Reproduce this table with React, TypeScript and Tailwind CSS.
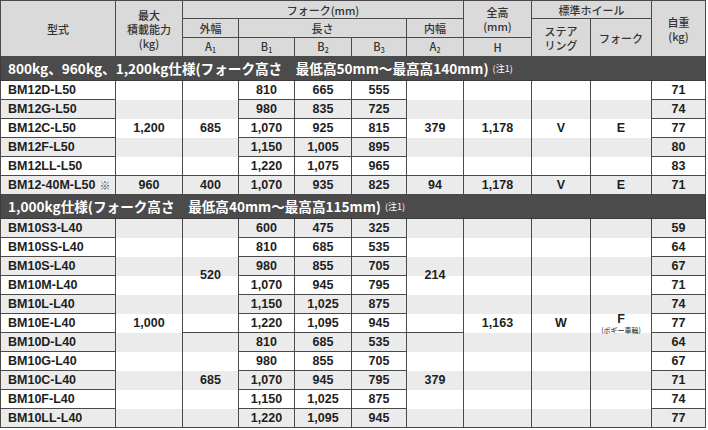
import { clsx } from "clsx"
import type { ReactNode } from "react"

// full class names so tailwind can see them
const ROW_START = [
  "",
  "row-start-1", "row-start-2", "row-start-3", "row-start-4", "row-start-5",
  "row-start-6", "row-start-7", "row-start-8", "row-start-9", "row-start-10",
  "row-start-11", "row-start-12", "row-start-13", "row-start-14", "row-start-15",
  "row-start-16", "row-start-17", "row-start-18", "row-start-19", "row-start-20",
  "row-start-21", "row-start-22",
]
const COL_START = [
  "",
  "col-start-1", "col-start-2", "col-start-3", "col-start-4", "col-start-5", "col-start-6",
  "col-start-7", "col-start-8", "col-start-9", "col-start-10", "col-start-11",
]
const ROW_SPAN = [
  "",
  "row-span-1", "row-span-2", "row-span-3", "row-span-4", "row-span-5", "row-span-6",
  "row-span-7", "row-span-8", "row-span-9", "row-span-10", "row-span-11",
]
const COL_SPAN = [
  "",
  "col-span-1", "col-span-2", "col-span-3", "col-span-4", "col-span-5", "col-span-6",
  "col-span-7", "col-span-8", "col-span-9", "col-span-10", "col-span-11",
]

type CellProps = {
  r: number
  c: number
  rs?: number
  cs?: number
  className?: string
  children?: ReactNode
}

function Cell({ r, c, rs = 1, cs = 1, className, children }: CellProps) {
  return (
    <div
      className={clsx(
        "flex items-center justify-center border-r border-b border-[#4a4a4a]",
        ROW_START[r],
        COL_START[c],
        ROW_SPAN[rs],
        COL_SPAN[cs],
        c === 1 && "border-l",
        r === 1 && "border-t",
        className,
      )}
    >
      {children}
    </div>
  )
}

function Head(props: CellProps) {
  return (
    <Cell
      {...props}
      className={clsx(
        "flex-col bg-[#dadada] text-center font-['Noto_Sans_CJK_JP',sans-serif] text-[11px] leading-[14px] font-medium text-[#333]",
        props.className,
      )}
    />
  )
}

function Sub({ l, n }: { l: string; n: string }) {
  return (
    <span>
      {l}
      <span className="relative top-[2px] text-[7px]">{n}</span>
    </span>
  )
}

type Row = { model: ReactNode; b1: string; b2: string; b3: string; kg: string }

const section1: Row[] = [
  { model: "BM12D-L50", b1: "810", b2: "665", b3: "555", kg: "71" },
  { model: "BM12G-L50", b1: "980", b2: "835", b3: "725", kg: "74" },
  { model: "BM12C-L50", b1: "1,070", b2: "925", b3: "815", kg: "77" },
  { model: "BM12F-L50", b1: "1,150", b2: "1,005", b3: "895", kg: "80" },
  { model: "BM12LL-L50", b1: "1,220", b2: "1,075", b3: "965", kg: "83" },
  {
    model: (
      <>
        BM12-40M-L50
        <span className="ml-[4px] font-['Noto_Sans_CJK_JP',sans-serif] text-[11px] font-normal text-[#555]">※</span>
      </>
    ),
    b1: "1,070",
    b2: "935",
    b3: "825",
    kg: "71",
  },
]

const section2: Row[] = [
  { model: "BM10S3-L40", b1: "600", b2: "475", b3: "325", kg: "59" },
  { model: "BM10SS-L40", b1: "810", b2: "685", b3: "535", kg: "64" },
  { model: "BM10S-L40", b1: "980", b2: "855", b3: "705", kg: "67" },
  { model: "BM10M-L40", b1: "1,070", b2: "945", b3: "795", kg: "71" },
  { model: "BM10L-L40", b1: "1,150", b2: "1,025", b3: "875", kg: "74" },
  { model: "BM10E-L40", b1: "1,220", b2: "1,095", b3: "945", kg: "77" },
  { model: "BM10D-L40", b1: "810", b2: "685", b3: "535", kg: "64" },
  { model: "BM10G-L40", b1: "980", b2: "855", b3: "705", kg: "67" },
  { model: "BM10C-L40", b1: "1,070", b2: "945", b3: "795", kg: "71" },
  { model: "BM10F-L40", b1: "1,150", b2: "1,025", b3: "875", kg: "74" },
  { model: "BM10LL-L40", b1: "1,220", b2: "1,095", b3: "945", kg: "77" },
]

function Rows({ rows, start }: { rows: Row[]; start: number }) {
  return (
    <>
      {rows.map((row, i) => {
        const r = start + i
        return (
          <div key={`bg${r}`} className={clsx("col-span-11 col-start-1", ROW_START[r], r % 2 === 0 ? "bg-[#ebebeb]" : "bg-white")} />
        )
      })}
      {rows.map((row, i) => {
        const r = start + i
        return (
          <div key={r} className="contents">
            <Cell r={r} c={1} className="justify-start pl-[7px]">{row.model}</Cell>
            <Cell r={r} c={4}>{row.b1}</Cell>
            <Cell r={r} c={5}>{row.b2}</Cell>
            <Cell r={r} c={6}>{row.b3}</Cell>
            <Cell r={r} c={11}>{row.kg}</Cell>
          </div>
        )
      })}
    </>
  )
}

function Band({ r, children }: { r: number; children: ReactNode }) {
  return (
    <div
      className={clsx(
        "col-span-11 col-start-1 flex items-center border-x border-b border-[#3a3a3a] bg-[#4b4b4b] pl-[7px] text-white",
        ROW_START[r],
      )}
    >
      <span className="font-['Liberation_Sans_Narrow','Noto_Sans_CJK_JP',sans-serif] text-[13.6px] font-bold">{children}</span>
      <span className="ml-[4px] font-['Noto_Sans_CJK_JP',sans-serif] text-[9px] font-normal">(注1)</span>
    </div>
  )
}

export default function App() {
  return (
    <div className="bg-white">
      <div className="grid w-[706px] grid-cols-[116px_67px_56px_56px_57px_55px_57px_68px_59px_61px_54px] grid-rows-[19px_19px_19px_24px_repeat(6,19px)_24px_repeat(11,19px)] font-['Liberation_Sans','Noto_Sans_CJK_JP',sans-serif] text-[12.5px] font-bold text-[#1e1e1e]">
        {/* header */}
        <Head r={1} c={1} rs={3}>型式</Head>
        <Head r={1} c={2} rs={3}>
          <span>最大</span>
          <span>積載能力</span>
          <span>(kg)</span>
        </Head>
        <Head r={1} c={3} cs={5}>フォーク(mm)</Head>
        <Head r={2} c={3}>外幅</Head>
        <Head r={2} c={4} cs={3}>長さ</Head>
        <Head r={2} c={7}>内幅</Head>
        <Head r={1} c={8} rs={2}>
          <span>全高</span>
          <span>(mm)</span>
        </Head>
        <Head r={3} c={3}><Sub l="A" n="1" /></Head>
        <Head r={3} c={4}><Sub l="B" n="1" /></Head>
        <Head r={3} c={5}><Sub l="B" n="2" /></Head>
        <Head r={3} c={6}><Sub l="B" n="3" /></Head>
        <Head r={3} c={7}><Sub l="A" n="2" /></Head>
        <Head r={3} c={8}>H</Head>
        <Head r={1} c={9} cs={2}>標準ホイール</Head>
        <Head r={2} c={9} rs={2}>
          <span>ステア</span>
          <span>リング</span>
        </Head>
        <Head r={2} c={10} rs={2}>フォーク</Head>
        <Head r={1} c={11} rs={3}>
          <span>自重</span>
          <span>(kg)</span>
        </Head>

        <Band r={4}>800kg、960kg、1,200kg仕様(フォーク高さ　最低高50mm〜最高高140mm)</Band>

        <Rows rows={section1} start={5} />
        <Cell r={5} c={2} rs={5}>1,200</Cell>
        <Cell r={5} c={3} rs={5}>685</Cell>
        <Cell r={5} c={7} rs={5}>379</Cell>
        <Cell r={5} c={8} rs={5}>1,178</Cell>
        <Cell r={5} c={9} rs={5}>V</Cell>
        <Cell r={5} c={10} rs={5}>E</Cell>
        <Cell r={10} c={2}>960</Cell>
        <Cell r={10} c={3}>400</Cell>
        <Cell r={10} c={7}>94</Cell>
        <Cell r={10} c={8}>1,178</Cell>
        <Cell r={10} c={9}>V</Cell>
        <Cell r={10} c={10}>E</Cell>

        <Band r={11}>1,000kg仕様(フォーク高さ　最低高40mm〜最高高115mm)</Band>

        <Rows rows={section2} start={12} />
        <Cell r={12} c={2} rs={11}>1,000</Cell>
        <Cell r={12} c={3} rs={6}>520</Cell>
        <Cell r={18} c={3} rs={5}>685</Cell>
        <Cell r={12} c={7} rs={6}>214</Cell>
        <Cell r={18} c={7} rs={5}>379</Cell>
        <Cell r={12} c={8} rs={11}>1,163</Cell>
        <Cell r={12} c={9} rs={11}>W</Cell>
        <Cell r={12} c={10} rs={11} className="flex-col">
          <span className="leading-[14px]">F</span>
          <span className="font-['Noto_Sans_CJK_JP',sans-serif] text-[7px] leading-[8px] font-normal">(ボギー車輪)</span>
        </Cell>
      </div>
    </div>
  )
}
